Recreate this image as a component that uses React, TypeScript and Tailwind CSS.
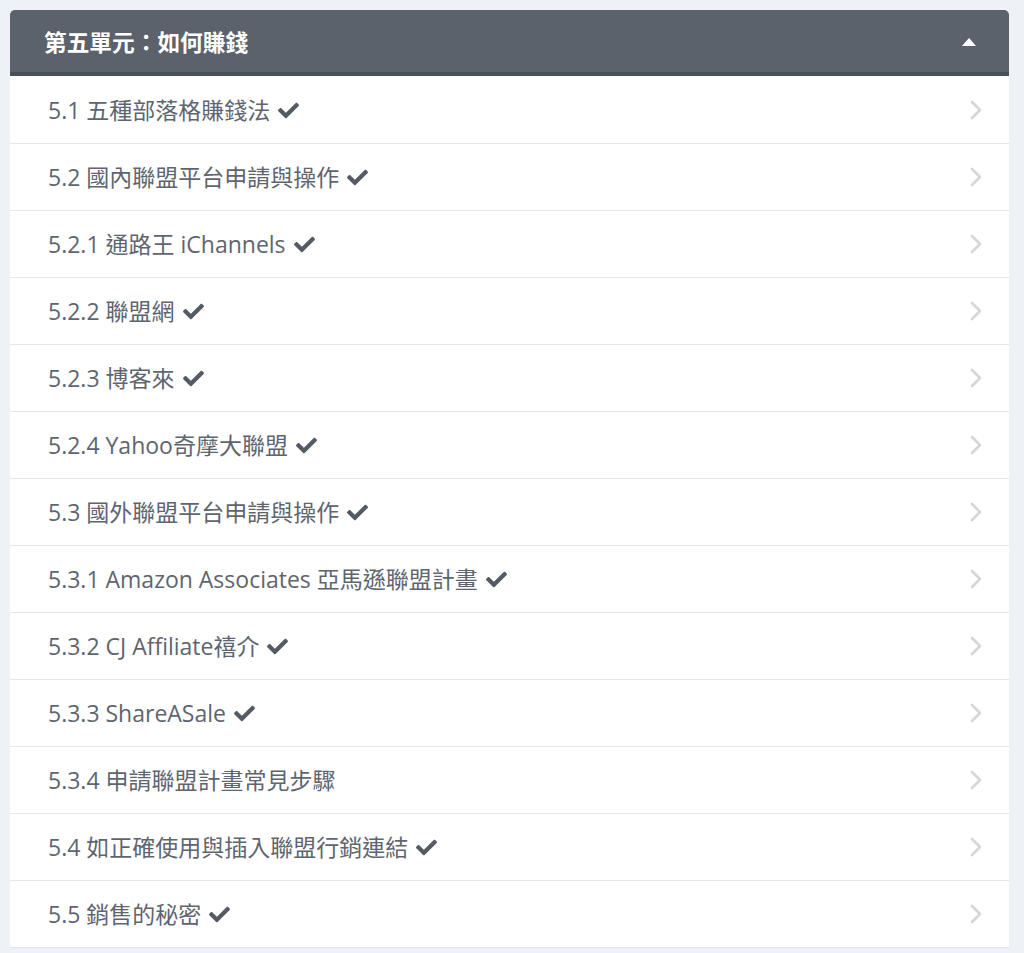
import React from "react";

const items: { label: string; done: boolean }[] = [
  { label: "5.1 五種部落格賺錢法", done: true },
  { label: "5.2 國內聯盟平台申請與操作", done: true },
  { label: "5.2.1 通路王 iChannels", done: true },
  { label: "5.2.2 聯盟網", done: true },
  { label: "5.2.3 博客來", done: true },
  { label: "5.2.4 Yahoo奇摩大聯盟", done: true },
  { label: "5.3 國外聯盟平台申請與操作", done: true },
  { label: "5.3.1 Amazon Associates 亞馬遜聯盟計畫", done: true },
  { label: "5.3.2 CJ Affiliate禧介", done: true },
  { label: "5.3.3 ShareASale", done: true },
  { label: "5.3.4 申請聯盟計畫常見步驟", done: false },
  { label: "5.4 如正確使用與插入聯盟行銷連結", done: true },
  { label: "5.5 銷售的秘密", done: true },
];

function Check() {
  return (
    <svg viewBox="0 0 512 512" className="ml-[7px] h-[21px] w-[23px] shrink-0" fill="#545b65">
      <path d="M173.898 439.404l-166.4-166.4c-9.997-9.997-9.997-26.206 0-36.204l36.203-36.204c9.997-9.998 26.207-9.998 36.204 0L192 312.69 432.095 72.596c9.997-9.997 26.207-9.997 36.204 0l36.203 36.204c9.997 9.997 9.997 26.206 0 36.204l-294.4 294.401c-9.998 9.997-26.207 9.997-36.204-.001z" />
    </svg>
  );
}

function Chevron() {
  return (
    <svg viewBox="0 0 14 22" className="h-[22px] w-[14px]" fill="none" stroke="#d4d6d9" strokeWidth="2.6" strokeLinecap="round" strokeLinejoin="round">
      <path d="M3 3l8 8-8 8" />
    </svg>
  );
}

export default function App() {
  return (
    <div
      className="min-h-[953px] bg-[#eef1f5] pt-[10px] pl-[10px] pr-[15px]"
      style={{ fontFamily: '"Open Sans", "Noto Sans CJK TC", sans-serif' }}
    >
      <div className="w-[999px]">
        <div className="flex h-[66px] items-center justify-between rounded-t-[5px] border-b-[4px] border-[#4a5058] bg-[#5b626c] pl-[34px] pr-[33px]">
          <span className="mt-[4px] text-[22.7px] font-bold text-white">第五單元：如何賺錢</span>
          <svg viewBox="0 0 14 8" className="mt-[2px] h-[8px] w-[14px]" fill="#ffffff">
            <path d="M0 8L7 0l7 8z" />
          </svg>
        </div>
        <div className="bg-white">
          {items.map((it) => (
            <div
              key={it.label}
              className="flex h-[67px] items-center justify-between border-b border-[#e4e6e9] pl-[38px] pr-[26px] first:h-[68px]"
            >
              <div className="mt-[1px] flex items-center text-[23px] text-[#5e656f]">
                <span>{it.label}</span>
                {it.done && <Check />}
              </div>
              <Chevron />
            </div>
          ))}
        </div>
      </div>
    </div>
  );
}
